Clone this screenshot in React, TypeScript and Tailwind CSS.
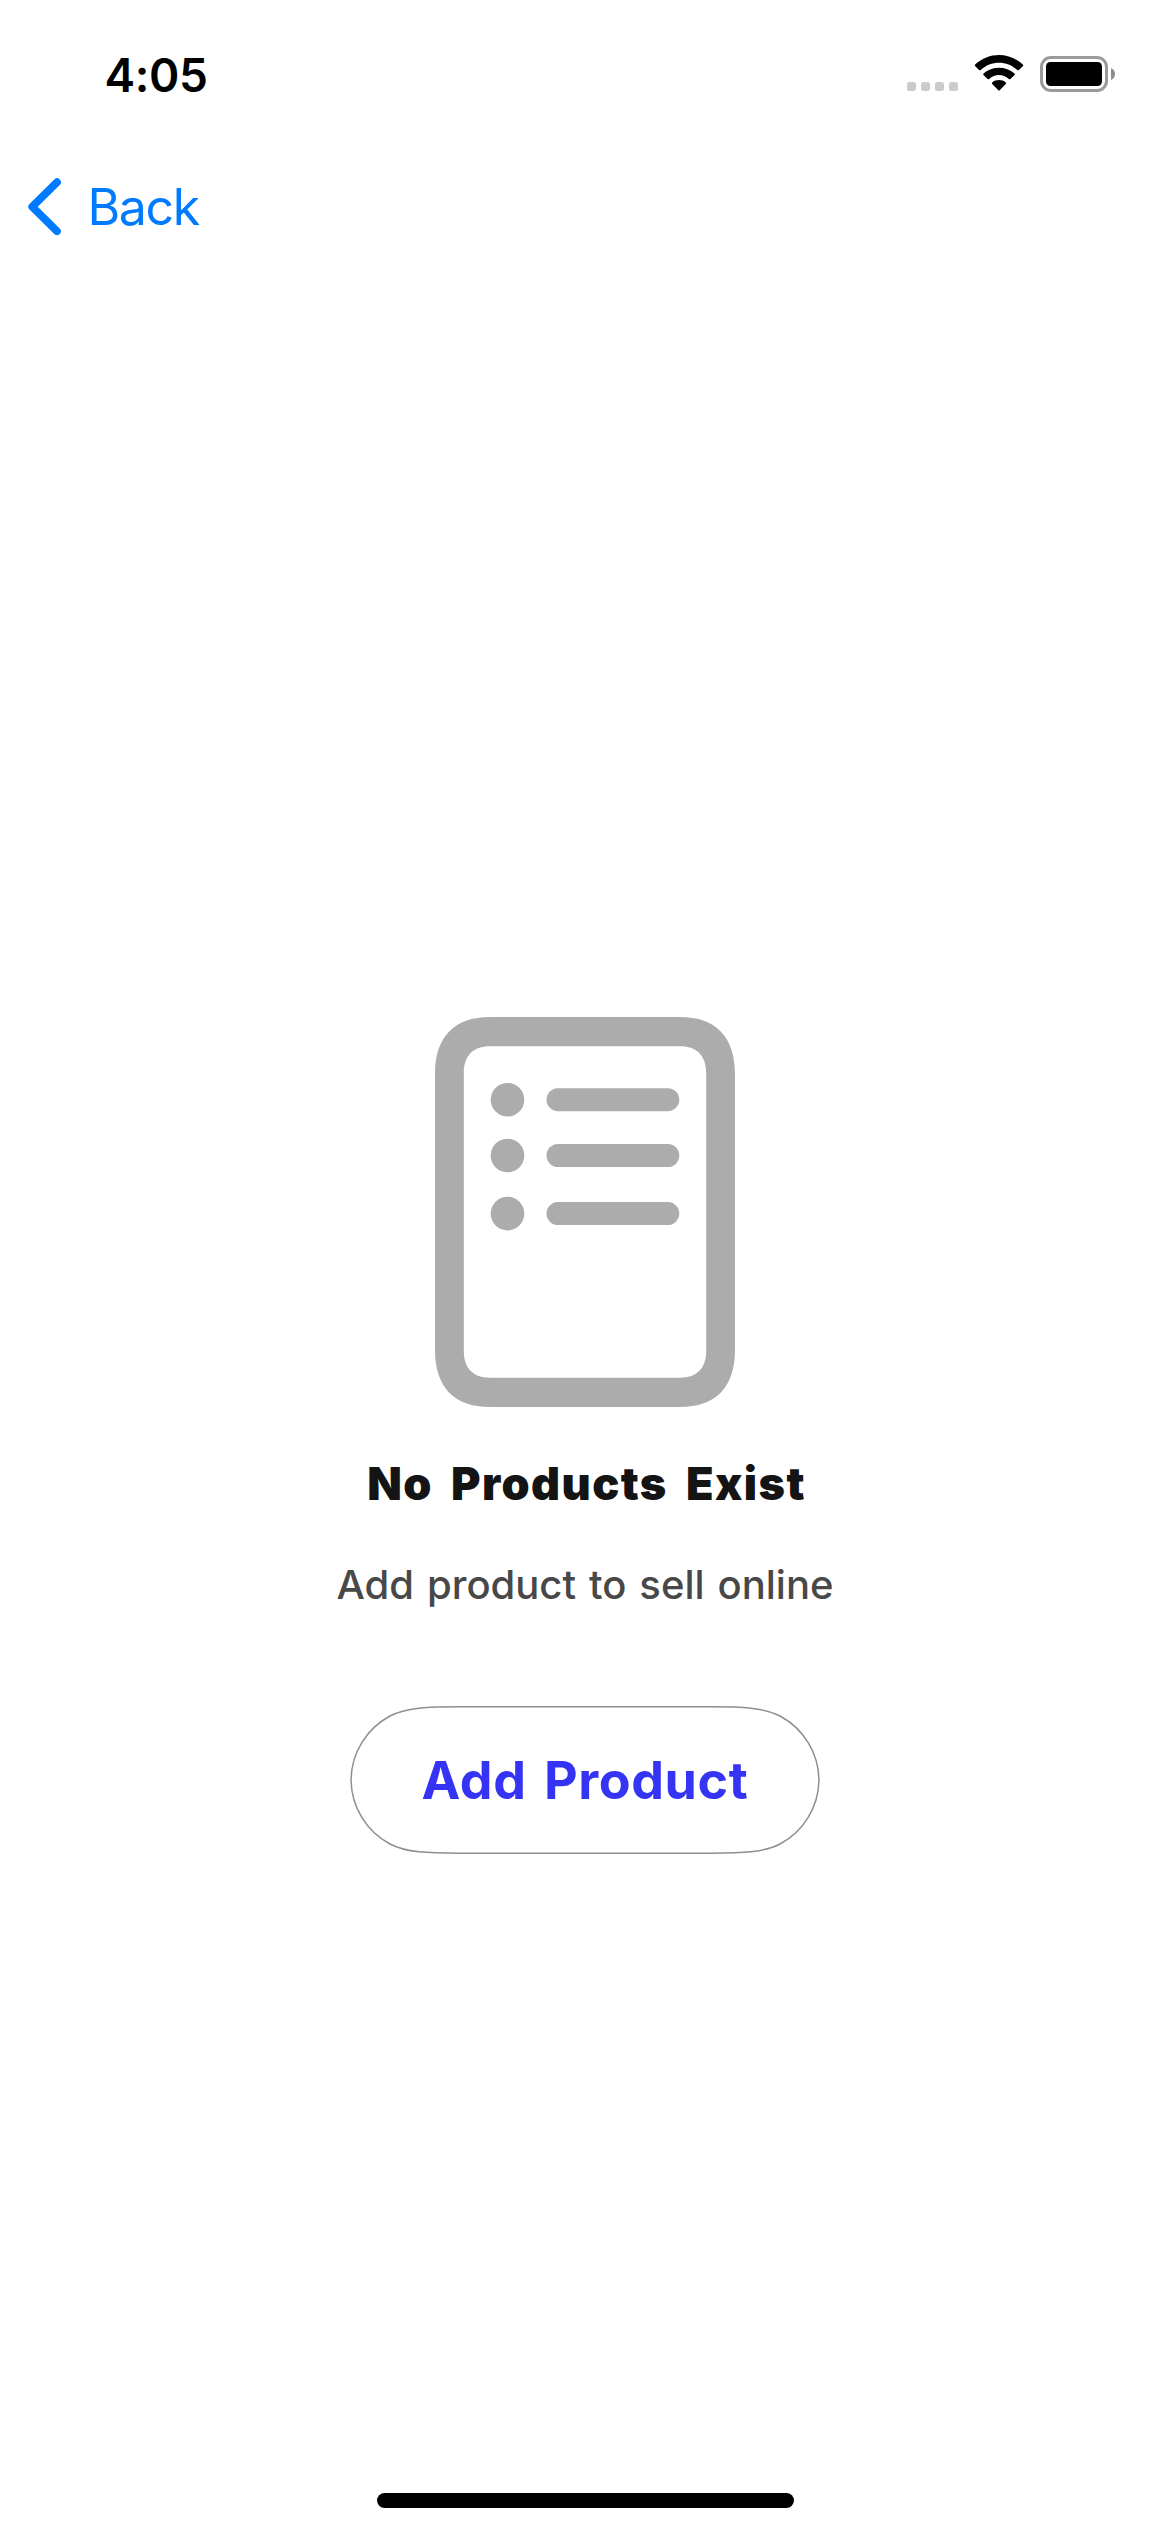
function WifiIcon() {
  return (
    <svg width="50" height="38" viewBox="0 0 50 38" className="block">
      <path d="M1.1 9.6 C15 -3.2 35 -3.2 48.9 9.6 Q49.6 10.4 48.9 11.1 L45 15 Q44.2 15.7 43.4 15 C33 5.2 17 5.2 6.6 15 Q5.8 15.7 5 15 L1.1 11.1 Q.4 10.4 1.1 9.6Z" />
      <path d="M9.5 18.6 C18 10.8 32 10.8 40.5 18.6 Q41.2 19.3 40.5 20 L36.4 24 Q35.7 24.6 34.9 23.9 C29 18.7 21 18.7 15.1 23.9 Q14.3 24.6 13.6 24 L9.5 20 Q8.8 19.3 9.5 18.6Z" />
      <path d="M18.2 27.4 C22 24.2 28 24.2 31.8 27.4 Q32.6 28.2 31.8 28.9 L25.7 35.2 Q25 35.9 24.3 35.2 L18.2 28.9 Q17.4 28.2 18.2 27.4Z" />
    </svg>
  );
}

function BatteryIcon() {
  return (
    <svg width="76" height="36" viewBox="0 0 76 36" className="block">
      <rect x="1.5" y="1.5" width="65" height="33" rx="9.5" fill="none" stroke="#9a9a9a" strokeWidth="3" />
      <rect x="6" y="6" width="56" height="24" rx="4.5" />
      <path d="M71 12 Q75 14 75 18 Q75 22 71 24Z" fill="#8c8c8c" />
    </svg>
  );
}

function ListIcon() {
  return (
    <svg width="300" height="390" viewBox="0 0 300 390" fill="#acacac" className="block">
      <path
        fillRule="evenodd"
        d="M0 57 C0 20 19 0 55 0 H245 C281 0 300 20 300 57 V333 C300 370 281 390 245 390 H55 C19 390 0 370 0 333Z M28.8 56 V334 C28.8 351 38 360.7 55 360.7 H245 C262 360.7 271.2 351 271.2 334 V56 C271.2 39 262 29.3 245 29.3 H55 C38 29.3 28.8 39 28.8 56Z"
      />
      {[82.7, 138.5, 196.6].map((y) => (
        <g key={y}>
          <circle cx="72.5" cy={y} r="16.8" />
          <rect x="111.5" y={y - 11.5} width="132.8" height="23" rx="11.5" />
        </g>
      ))}
    </svg>
  );
}

export default function App() {
  return (
    <div className="flex h-[2532px] w-[1170px] flex-col overflow-hidden bg-white font-['Inter',sans-serif] text-black">
      <header className="flex h-[141px] items-start justify-between pr-[54px] pl-[104.5px]">
        <span className="mt-[51px] text-[46px] leading-[48px] font-semibold tracking-[-0.4px]">4:05</span>
        <div className="mt-[55px] flex items-start">
          <div className="mt-[27px] mr-4 flex gap-[5px]">
            {[0, 1, 2, 3].map((i) => (
              <span key={i} className="size-[9px] rounded-[2.5px] bg-[#cbcbcb]" />
            ))}
          </div>
          <WifiIcon />
          <div className="mt-px ml-4">
            <BatteryIcon />
          </div>
        </div>
      </header>

      <nav className="flex h-[132px] items-center pl-7">
        <button className="flex items-center text-[#007aff]">
          <svg width="36" height="60" viewBox="0 0 36 60" fill="none" stroke="currentColor" strokeWidth="7.8" strokeLinecap="round" strokeLinejoin="round">
            <path d="M29 5.2 L4.2 29.7 L29 54.2" />
          </svg>
          <span className="ml-[23.5px] text-[50px] leading-[60px] tracking-[-1.4px]">Back</span>
        </button>
      </nav>

      <main className="flex flex-1 flex-col items-center pt-[744px]">
        <ListIcon />
        <h1 className="mt-[47px] pl-[3px] text-[45px] leading-[60px] font-black tracking-[1.4px] [word-spacing:8px] whitespace-nowrap text-[#141414]">No Products Exist</h1>
        <p className="mt-[41px] text-[40px] leading-[60px] font-[450] [word-spacing:2.3px] whitespace-nowrap text-[#484848]">Add product to sell online</p>
        <button className="relative mt-[91px] flex h-[148px] w-[470px] items-center justify-center pt-[2px]">
          <svg width="470" height="148" viewBox="0 0 470 148" fill="none" stroke="#8e8e93" strokeWidth="1.5" className="absolute inset-0">
            <path d="M1 74 A74 74 0 0 1 40 10 C56 1.5 78 .8 110 .8 H360 C392 .8 414 1.5 430 10 A74 74 0 0 1 469 74 A74 74 0 0 1 430 138 C414 146.5 392 147.2 360 147.2 H110 C78 147.2 56 146.5 40 138 A74 74 0 0 1 1 74Z" />
          </svg>
          <span className="text-[52px] leading-[60px] font-bold tracking-[0.6px] [word-spacing:4.5px] whitespace-nowrap text-[#3634f4]">Add Product</span>
        </button>
      </main>

      <footer className="flex h-[39px] justify-center">
        <div className="h-[15px] w-[417px] rounded-full bg-black" />
      </footer>
    </div>
  );
}
